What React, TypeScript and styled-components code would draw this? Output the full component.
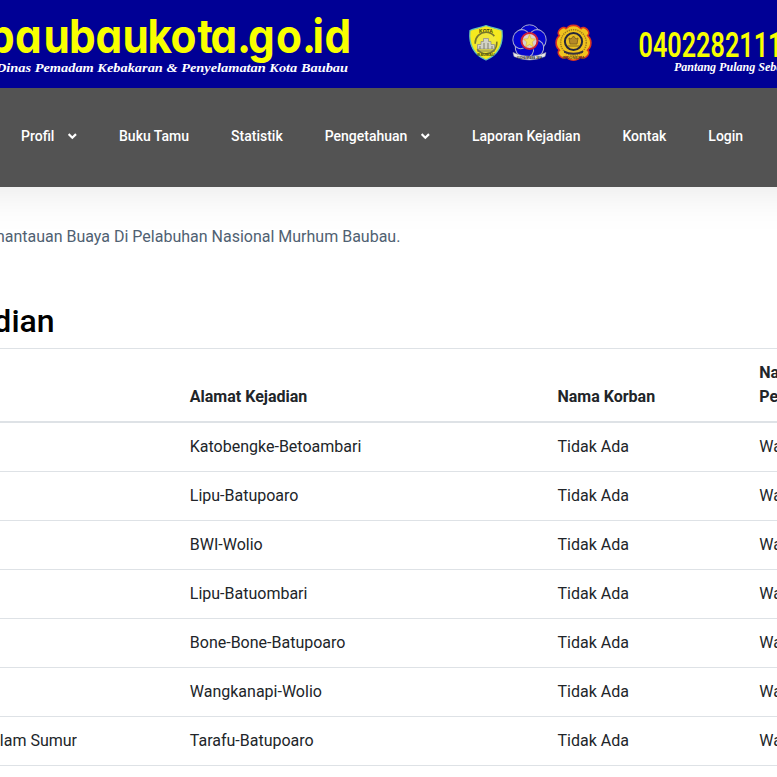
import React from "react";
import styled, { createGlobalStyle } from "styled-components";

const GlobalStyle = createGlobalStyle`
  *, *::before, *::after { box-sizing: border-box; }
  html, body { margin: 0; overflow: hidden; }
  body {
    background: #fff;
    color: #212529;
    font-family: Roboto, "Liberation Sans", sans-serif;
    font-size: 16px;
    line-height: 24px;
  }
`;

const Page = styled.div`
  width: 777px;
  height: 777px;
  overflow: hidden;
`;

const Header = styled.header`
  margin: 0 -150px;
  padding: 0 150px;
  height: 187px;
  background: #535353;
  box-shadow: 0 0 45px rgba(0, 0, 0, 0.11);
`;

const Banner = styled.div`
  display: flex;
  height: 88px;
  margin: 0 -150px;
  padding-left: 150px;
  background: #000095;
  overflow: hidden;

  svg {
    flex: none;
    display: block;
  }
`;

const Nav = styled.nav`
  display: flex;
  gap: 42px;
  height: 96px;
  padding-left: 21px;
  align-items: center;
`;

const NavLink = styled.a`
  display: flex;
  flex: none;
  align-items: center;
  gap: 14px;
  color: #fff;
  font-size: 14px;
  font-weight: 500;
  line-height: 20px;
  white-space: nowrap;
`;

const Clipped = styled.div<{ $width: number }>`
  display: flex;
  justify-content: flex-end;
  width: ${(p) => p.$width}px;
  overflow: hidden;
  white-space: nowrap;
`;

const Ticker = styled.div`
  margin: 38px 0 0;
  color: #506172;
`;

const Title = styled.h2`
  margin: 53px 0 8px;
  color: #000;
  font-size: 32px;
  font-weight: 500;
  line-height: 38px;
`;

const Table = styled.table`
  width: 949px;
  table-layout: fixed;
  border-collapse: collapse;
`;

const HeadCell = styled.th<{ $width: number }>`
  width: ${(p) => p.$width}px;
  padding: 12px;
  border-top: 1px solid #dee2e6;
  border-bottom: 2px solid #dee2e6;
  font-weight: 700;
  text-align: left;
  vertical-align: bottom;
`;

const Cell = styled.td<{ $flush?: boolean }>`
  padding: ${(p) => (p.$flush ? "12px 0" : "12px")};
  border-top: 1px solid #dee2e6;
  white-space: nowrap;
`;

const Chevron = () => (
  <svg width="8.6" height="7" viewBox="0 0 8.6 7" fill="none">
    <path d="M.6 1.1 4.3 4.7 8 1.1" stroke="#fff" strokeWidth="2.2" />
  </svg>
);

const letterStarts = [-12, 15, 43.5, 69, 95.5, 122.5, 147.5, 170.5, 197.5, 210.5, 237, 248, 276, 302, 312.5, 324.500];
const letterScale = 0.9;

const Wordmark = () => (
  <svg width="460" height="88" viewBox="0 0 460 88">
    <text
      x={letterStarts.map((v) => (v / letterScale).toFixed(2)).join(" ")}
      y="53.3"
      transform={`scale(${letterScale} 1)`}
      fill="#f8ff00"
      fontFamily="Inter, sans-serif"
      fontSize="47"
      fontWeight="650"
      style={{ fontFeatureSettings: '"cv11"' }}
    >
      baubaukota.go.id
    </text>
    <text
      x="-4"
      y="71.5"
      textLength="352"
      lengthAdjust="spacingAndGlyphs"
      fill="#fff"
      fontFamily="Liberation Serif, serif"
      fontSize="13"
      fontWeight="700"
      fontStyle="italic"
    >
      Dinas Pemadam Kebakaran &amp; Penyelamatan Kota Baubau
    </text>
  </svg>
);

const petals = [0, 72, 144, 216, 288];
const points = [0, 90, 180, 270];
const corners = [45, 135, 225, 315];

const Emblems = () => (
  <svg width="167" height="88" viewBox="460 0 167 88">
    <path
      d="M486 25.5C480 28 474 28.5 470 30.5C469 40 470 53 486 60C502 53 503 40 502 30.5C498 28.5 492 28 486 25.5Z"
      fill="#f5e91f"
      stroke="#5fc0b8"
      strokeWidth="1.2"
    />
    <text x="486" y="32.8" textAnchor="middle" fill="#44440a" fontFamily="Liberation Sans" fontSize="5" fontWeight="700">KOTA</text>
    <circle cx="486" cy="43" r="10.8" fill="#f0e83a" stroke="#77772c" strokeWidth="1.6" strokeDasharray="27 6" />
    <path d="M477.5 44.5h3.5v-3h2.5v-3h5v3h2.5v3h3.5v4.5h-17z" fill="#d2d2c6" stroke="#888" strokeWidth="0.7" />
    <path d="M480 49v-3M484 49v-6M488 49v-6M492 49v-3M477 51h18" stroke="#77775c" strokeWidth="0.9" />
    <text x="486" y="56" textAnchor="middle" fill="#55550a" fontFamily="Liberation Sans" fontSize="4" fontWeight="700">BAUBAU</text>

    {petals.map((a) => (
      <ellipse key={a} cx="529.5" cy="33.2" rx="9.6" ry="8.4" fill="#0505cc" stroke="#a8aad0" strokeWidth="1" transform={`rotate(${a} 529.5 41.8)`} />
    ))}
    <circle cx="529.5" cy="41.5" r="9" fill="#0505cc" />
    <circle cx="529.5" cy="41" r="8" fill="#d9d0d0" stroke="#cf2038" strokeWidth="2" />
    <path d="M529.5 34.5l1.7 4.3 4.5.2-3.5 3 1.3 5-4-2.5-4 2.5 1.3-5-3.5-3 4.5-.2z" fill="#f8e060" stroke="#c9a030" strokeWidth="0.5" />
    <path d="M513 52.5q16.500 7.500 33 0l-1 4q-15.500 7-31 0z" fill="#e8e8e8" stroke="#aaa" strokeWidth="0.5" />
    <text x="517" y="59" fill="#222" fontFamily="Liberation Sans" fontSize="3.6" fontWeight="700" textLength="25" lengthAdjust="spacingAndGlyphs">YUDHA BRAMA JAYA</text>

    <g fill="#f0c31e" stroke="#dc3420" strokeWidth="1.6">
      {points.map((a) => (
        <ellipse key={a} cx="573.5" cy="29.8" rx="7" ry="4.4" transform={`rotate(${a} 573.5 42.8)`} />
      ))}
      {corners.map((a) => (
        <ellipse key={a} cx="573.5" cy="27" rx="4.8" ry="3.2" transform={`rotate(${a} 573.5 42.8)`} />
      ))}
    </g>
    <circle cx="573.5" cy="42.8" r="15.2" fill="#f0c31e" />
    <circle cx="573.5" cy="42.5" r="12.8" fill="none" stroke="#a07c1c" strokeWidth="1.5" strokeDasharray="1.3 0.9" />
    <circle cx="573.5" cy="41.5" r="8.6" fill="#e8bd24" stroke="#24263c" strokeWidth="2" />
    <path d="M569 38l2 1 2.5-3 2.5 3 2-1-1 6h-7zM568 46h11" fill="#b58a28" stroke="#80601c" strokeWidth="0.9" />
    <path d="M564 50.5q9.5 4.5 19 0v2.3q-9.5 4-19 0z" fill="#383040" />
    <text x="573.5" y="58.5" textAnchor="middle" fill="#5b421c" fontFamily="Liberation Sans" fontSize="4" fontWeight="700">INDONESIA</text>
  </svg>
);

const Hotline = () => (
  <svg width="150" height="88" viewBox="627 0 150 88">
    <text
      x="638.5"
      y="57.3"
      textLength="144"
      lengthAdjust="spacingAndGlyphs"
      fill="#f8ff00"
      fontFamily="Roboto, sans-serif"
      fontSize="34.5"
      fontWeight="600"
    >
      0402282111
    </text>
    <text
      x="674"
      y="70.5"
      textLength="127"
      lengthAdjust="spacingAndGlyphs"
      fill="#fff"
      fontFamily="Liberation Serif, serif"
      fontSize="13"
      fontWeight="700"
      fontStyle="italic"
    >
      Pantang Pulang Sebelum
    </text>
  </svg>
);

const links = [
  { label: "Profil", menu: true },
  { label: "Buku Tamu" },
  { label: "Statistik" },
  { label: "Pengetahuan", menu: true },
  { label: "Laporan Kejadian" },
  { label: "Kontak" },
  { label: "Login" },
];

const rows = [
  { address: "Katobengke-Betoambari" },
  { address: "Lipu-Batupoaro" },
  { address: "BWI-Wolio" },
  { address: "Lipu-Batuombari" },
  { address: "Bone-Bone-Batupoaro" },
  { address: "Wangkanapi-Wolio" },
  { kind: "Dalam Sumur", address: "Tarafu-Batupoaro" },
  { address: "" },
];

export default function App() {
  return (
    <Page>
      <GlobalStyle />
      <Header>
        <Banner>
          <Wordmark />
          <Emblems />
          <Hotline />
        </Banner>
        <Nav>
          {links.map((l) => (
            <NavLink key={l.label}>
              {l.label}
              {l.menu && <Chevron />}
            </NavLink>
          ))}
        </Nav>
      </Header>
      <Ticker>
        <Clipped $width={400.4}>Pemantauan Buaya Di Pelabuhan Nasional Murhum Baubau.</Clipped>
      </Ticker>
      <Title>
        <Clipped $width={54.6}>Kejadian</Clipped>
      </Title>
      <Table>
        <thead>
          <tr>
            <HeadCell $width={177.8} />
            <HeadCell $width={367.7}>Alamat Kejadian</HeadCell>
            <HeadCell $width={201.8}>Nama Korban</HeadCell>
            <HeadCell $width={201.7}>
              Nama
              <br />
              Pelapor
            </HeadCell>
          </tr>
        </thead>
        <tbody>
          {rows.map((r, i) => (
            <tr key={i}>
              <Cell $flush>{r.kind && <Clipped $width={77}>{r.kind}</Clipped>}</Cell>
              <Cell>{r.address}</Cell>
              <Cell>{r.address && "Tidak Ada"}</Cell>
              <Cell>{r.address && "Warga"}</Cell>
            </tr>
          ))}
        </tbody>
      </Table>
    </Page>
  );
}
